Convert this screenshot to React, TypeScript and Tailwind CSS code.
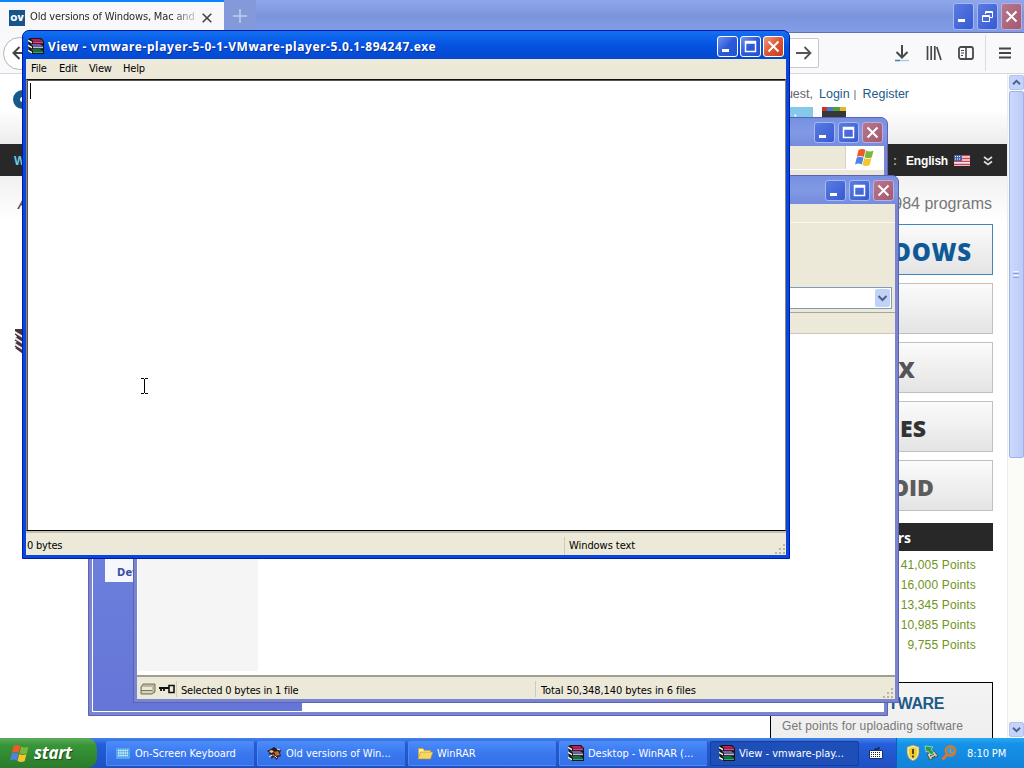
import type { ReactNode } from "react";
import clsx from "clsx";

const osButtons = [
  { label: "WINDOWS", className: "border-[#3c87c0] pr-[20px] text-[#0e5a97]" },
  { label: "", className: "border-[#c0c0c4] text-[#555]" },
  { label: "LINUX", className: "border-[#c0c0c4] pr-[77px] text-[#555]" },
  { label: "GAMES", className: "border-[#c0c0c4] pr-[66px] text-[#333]" },
  { label: "ANDROID", className: "border-[#c0c0c4] pr-[58px] text-[#5c5c5c]" },
];

const points = ["41,005", "16,000", "13,345", "10,985", "9,755"];

const RarIcon = ({ className }: { className?: string }) => (
  <svg viewBox="0 0 16 16" className={clsx("h-4 w-4 shrink-0", className)}>
    <path d="M0 1l3-1h10l3 3v13H4L0 13l1-2-1-3 1-2-1-2z" fill="#151515" />
    <path d="M3 1h9l3 2H5z" fill="#c01c58" />
    <path d="M5 3.500h10v1.700H5z" fill="#e8437a" />
    <path d="M3 6h9l3 2H5z" fill="#6a5fb0" />
    <path d="M5 8.500h10v1.700H5z" fill="#c3b4dc" />
    <path d="M3 11h9l3 2H5z" fill="#12733a" />
    <path d="M5 13.500h10V15H5z" fill="#2fae74" />
    <path
      d="M0 1.500l4 2.200v1.800L0 3.300zM0 6.500l4 2.200v1.800L0 8.300zM0 11.500l4 2.200v1.800l-4-2.200z"
      fill="#f5f1e4"
    />
  </svg>
);

const WindowsFlag = ({ className }: { className?: string }) => (
  <svg viewBox="0 0 20 19" className={clsx("shrink-0", className)}>
    <path d="M3.500 2q3.500-2 7 0L8.800 9q-3.300-1.800-7 0z" fill="#ec5b29" />
    <path d="M11.200 2.500q3.500 2 7.300 0L16.800 9.300q-3.500 1.900-7.300 0z" fill="#79b83c" />
    <path d="M1.700 9.700q3.300-1.800 6.800 0L6.800 16.500q-3.300-1.800-6.800 0z" fill="#4c83e6" />
    <path d="M9.200 10q3.300 1.800 7.300 0l-1.800 7q-3.500 1.800-7.200 0z" fill="#f6c52e" />
  </svg>
);

type CaptionButtonsProps = {
  active?: boolean;
  restore?: boolean;
  className?: string;
};

const CaptionButtons = (props: CaptionButtonsProps) => {
  const { active, restore, className } = props;
  const base = "h-[21px] w-[21px] rounded-[3px] border";
  const blue = active
    ? "border-white bg-linear-to-br from-[#7593f0] via-[#2c58da] to-[#2454cf]"
    : "border-[#a4b8f2] bg-linear-to-br from-[#5b7be2] to-[#3659d3]";
  const red = active
    ? "border-white bg-linear-to-br from-[#ee9a80] via-[#dc5532] to-[#c6401c]"
    : "border-[#c3aad8] bg-linear-to-br from-[#b5788f] to-[#a5586f]";

  return (
    <div className={clsx("flex items-center gap-[2px]", className)}>
      <svg viewBox="0 0 19 19" className={clsx(base, blue)}>
        <path d="M4 12h7v3H4z" fill="#fff" />
      </svg>
      <svg viewBox="0 0 19 19" className={clsx(base, blue)}>
        {restore ? (
          <path
            d="M7.500 7V4.500h7v6H12M7 5.500h8M4.500 8.500h7v6h-7zM4 9.500h8"
            fill="none"
            stroke="#fff"
          />
        ) : (
          <path
            d="M4.500 4.500h10v10h-10zM4 6h11"
            fill="none"
            stroke="#fff"
            strokeWidth="1.500"
          />
        )}
      </svg>
      <svg viewBox="0 0 19 19" className={clsx(base, red)}>
        <path d="M4.500 4.500l10 10M14.500 4.500l-10 10" stroke="#fff" strokeWidth="2" />
      </svg>
    </div>
  );
};

const ResizeGrip = () => (
  <svg viewBox="0 0 12 12" className="h-3 w-3 shrink-0">
    <path
      d="M9 1h2v2H9zM5 5h2v2H5zM9 5h2v2H9zM1 9h2v2H1zM5 9h2v2H5zM9 9h2v2H9z"
      fill="#b8b4a2"
    />
  </svg>
);

const ScrollButton = ({ d }: { d: string }) => (
  <svg
    viewBox="0 0 15 15"
    className="h-[15px] w-[15px] shrink-0 rounded-[2px] border border-[#b4c4f0] bg-[#c4d3fc]"
  >
    <path d={d} fill="none" stroke="#4d6185" strokeWidth="2.200" />
  </svg>
);

const Browser = () => (
  <div className="flex h-[738px] w-[1024px] flex-col font-['Liberation_Sans',sans-serif] [font-stretch:normal]">
    <div className="flex h-[33px] shrink-0 border-b border-[#5b72c0] bg-linear-to-b from-[#8ea7ec] via-[#7b95dd] to-[#829de6]">
      <div className="flex h-[33px] w-[224px] items-center border-t-2 border-[#0a84ff] bg-[#f8f8fb] pl-[9px] text-[#222]">
        <div className="flex h-4 w-4 items-center justify-center bg-[#16558b] font-['Open_Sans',sans-serif] text-[9px] font-extrabold text-white">
          OV
        </div>
        <span className="ml-[5px] w-[166px] bg-linear-to-r from-[#222] from-85% to-[#22222230] bg-clip-text font-['DejaVu_Sans_Condensed','DejaVu_Sans',sans-serif] text-[11px] tracking-[-0.150px] whitespace-nowrap text-transparent [font-stretch:condensed]">
          Old versions of Windows, Mac and
        </span>
        <svg viewBox="0 0 10 10" className="ml-[6px] h-[10px] w-[10px]">
          <path d="M.7.700l8.600 8.600M9.300.7L.7 9.300" stroke="#444" strokeWidth="1.600" />
        </svg>
      </div>
      <div className="flex w-8 items-center justify-center bg-[#8499da]">
        <svg viewBox="0 0 14 14" className="h-[14px] w-[14px]">
          <path d="M7 0v14M0 7h14" stroke="#c0ccf0" strokeWidth="1.600" />
        </svg>
      </div>
      <CaptionButtons restore className="mr-0 ml-auto gap-[3px] pr-[2px] [&>svg]:h-[27px]" />
    </div>

    <div className="flex h-[41px] shrink-0 items-center border-b border-[#d8d8dc] bg-[#f9f9fb]">
      <div className="ml-[3px] flex h-[33px] w-[33px] items-center rounded-full border border-[#b4b4b8] bg-white pl-2">
        <svg viewBox="0 0 14 14" className="h-[14px] w-[14px]">
          <path d="M14 7H2M7.500 1L1.500 7l6 6" fill="none" stroke="#444" strokeWidth="2" />
        </svg>
      </div>
      <div className="ml-[700px] flex h-[30px] w-[83px] items-center justify-end rounded-[2px] border border-[#c8c8cc] bg-white pr-[6px]">
        <svg viewBox="0 0 16 14" className="h-[14px] w-4">
          <path d="M0 7h14M8.500 1l6 6-6 6" fill="none" stroke="#555" strokeWidth="1.800" />
        </svg>
      </div>
      <svg viewBox="0 0 16 18" className="ml-[75px] h-[18px] w-4">
        <path d="M8 1v12M2.500 8L8 13.500 13.500 8" fill="none" stroke="#484848" strokeWidth="2" />
        <path d="M1 16.500h14" stroke="#a7c8e2" strokeWidth="1.400" />
        <path d="M1 16.500h5" stroke="#3f86bd" strokeWidth="1.400" />
      </svg>
      <svg viewBox="0 0 16 16" className="ml-4 h-4 w-4">
        <path d="M1.500 1v14M5.200 1v14M8.800 1v14M10.800 2l4.200 13" stroke="#484848" strokeWidth="1.700" />
      </svg>
      <svg viewBox="0 0 16 14" className="ml-4 h-[14px] w-4" fill="none" stroke="#484848">
        <rect x="1" y="1" width="14" height="12" rx="2" strokeWidth="1.800" />
        <path d="M8 1v12" strokeWidth="1.600" />
        <path d="M3 4.500h3M3 7h3M3 9.500h2" />
      </svg>
      <div className="ml-[11px] h-9 w-px bg-[#dcdce0]" />
      <svg viewBox="0 0 12 12" className="ml-[13px] h-3 w-3">
        <path d="M0 1.500h12M0 6h12M0 10.500h12" stroke="#444" strokeWidth="1.800" />
      </svg>
    </div>

    <div className="flex min-h-0 flex-1">
      <div className="flex w-[1007px] flex-col overflow-hidden bg-white">
        <div className="flex h-[70px] shrink-0 bg-linear-to-b from-white from-50% to-[#ececec]">
          <div className="mt-4 ml-[13px] h-[19px] w-[19px] rounded-full border-7 border-[#17598a] bg-white" />
          <div className="mt-[12px] ml-[739px] flex flex-col">
            <div className="flex h-4 items-center text-[12.500px] whitespace-pre text-[#666]">
              <span className="w-[42px] text-right">Guest,</span>
              <span className="ml-[6px] text-[#245a8a]">Login</span>
              <span className="ml-[4px] text-[11px]">|</span>
              <span className="ml-[6px] text-[#245a8a]">Register</span>
            </div>
            <div className="mt-[5px] flex">
              <div className="ml-[17px] h-6 w-[25px] bg-[#85c9ea] pt-1 pl-[6px] text-[9px] text-white">t</div>
              <div className="ml-[9px] h-6 w-6 bg-[#373737]">
                <div className="flex h-1">
                  <div className="w-[5px] bg-[#cc3326]" />
                  <div className="w-[6px] bg-[#4379d8]" />
                  <div className="w-[7px] bg-[#4fa03c]" />
                  <div className="w-[6px] bg-[#e6b527]" />
                </div>
              </div>
            </div>
          </div>
        </div>

        <div className="flex h-8 shrink-0 items-center bg-[#282828] pt-px pr-[13px] pl-[14px] text-[12px] font-bold text-white">
          <span className="text-[#69cbea]">WINDOWS</span>
          <span className="ml-auto text-[#aaa]">:</span>
          <span className="ml-[9px] tracking-[-0.200px]">English</span>
          <svg viewBox="0 0 16 11" className="ml-[6px] h-[11px] w-4">
            <path d="M0 0h16v11H0z" fill="#f4e6e8" />
            <path d="M0 .700h16M0 3.500h16M0 6.300h16M0 9.500h16" stroke="#ce4552" strokeWidth="1.300" />
            <path d="M0 0h8v6H0z" fill="#4663ad" />
            <path d="M1 1.500h6M1 4h6" stroke="#fff" strokeDasharray="1 1" />
          </svg>
          <svg viewBox="0 0 10 10" className="mr-px ml-[13px] h-[10px] w-[10px]">
            <path d="M1 1l4 3 4-3M1 5.500l4 3 4-3" fill="none" stroke="#ddd" strokeWidth="1.700" />
          </svg>
        </div>

        <div className="flex min-h-0 flex-1 justify-between bg-linear-to-b from-[#f1f1f1] to-white to-8% pr-[14px] pl-[14px]">
          <div className="flex flex-col">
            <span className="mt-[18px] ml-1 text-[16px] leading-5 text-[#444] italic">A</span>
            <svg viewBox="0 0 16 28" className="mt-[114px] h-7 w-4">
              <path d="M1 1h15v27L9 26 1 20l2-1-2-4 2-1-2-4 2-1-2-4z" fill="#47333b" />
              <path d="M1 3l8 5v3L1 6zM1 9l8 5v3l-8-5zM1 15l8 5v3l-8-5z" fill="#efeaf0" />
              <path d="M1 6l8 5M1 12l8 5M1 18l8 5" stroke="#47333b" strokeWidth="1.200" />
            </svg>
          </div>
          <div className="flex w-[223px] flex-col">
            <span className="mt-[18px] pr-px text-right text-[16px] leading-5 text-[#777]">24,984 programs</span>
            <div className="mt-[10px] flex flex-col gap-2">
              {osButtons.map((button, index) => (
                <div
                  key={index}
                  className={clsx(
                    "flex h-[51px] items-center justify-end border bg-linear-to-b from-[#fbfbfb] to-[#e4e4e4] pt-[4px] font-['Open_Sans',sans-serif] leading-none font-extrabold",
                    index > 1 ? "text-[23px]" : "text-[24px] tracking-[0.800px]",
                    button.className
                  )}
                >
                  {button.label}
                </div>
              ))}
            </div>
            <div className="mt-3 flex h-7 shrink-0 items-center justify-end bg-[#282828] pr-[82px] font-['Open_Sans',sans-serif] text-[14px] font-bold text-white">
              Top uploaders
            </div>
            <div className="mt-[4px] flex flex-col pr-[17px] text-right text-[12px] leading-5 tracking-[0.150px] text-[#6f9420]">
              {points.map((point) => (
                <span key={point}>{point} Points</span>
              ))}
            </div>
            <div className="mt-[27px] flex h-20 shrink-0 flex-col border border-black bg-linear-to-b from-[#f4f4f4] to-[#ececec] pt-[11px]">
              <span className="pr-[48px] text-right text-[16px] leading-5 font-bold tracking-[-0.400px] text-[#1d5a85]">
                UPLOAD SOFTWARE
              </span>
              <span className="mt-[2px] pl-[11px] text-[12px] leading-5 tracking-[0.150px] whitespace-nowrap text-[#777]">
                Get points for uploading software
              </span>
            </div>
          </div>
        </div>
      </div>

      <div className="flex w-[17px] flex-col items-center border-l border-[#eeeee8] bg-[#fbfbf8] pt-[1px]">
        <ScrollButton d="M3.500 9.500l4-4 4 4" />
        <div className="mt-[1px] flex h-[367px] w-[15px] items-center justify-center rounded-[2px] border border-[#9cb4e8] bg-linear-to-r from-[#cbd8ff] to-[#bccbf8]">
          <div className="flex w-[6px] flex-col gap-px">
            <div className="h-px bg-[#eef3ff]" />
            <div className="h-px bg-[#8ea6df]" />
            <div className="h-px bg-[#eef3ff]" />
            <div className="h-px bg-[#8ea6df]" />
          </div>
        </div>
        <div className="mt-auto flex pb-[1px]">
          <ScrollButton d="M3.500 5.500l4 4 4-4" />
        </div>
      </div>
    </div>
  </div>
);

type InactiveWindowProps = {
  className: string;
  children: ReactNode;
};

const InactiveWindow = ({ className, children }: InactiveWindowProps) => (
  <div
    className={clsx(
      "absolute flex flex-col overflow-hidden rounded-t-[7px] border border-[#5a63b4] bg-[#7b84d0]",
      className
    )}
  >
    <div className="flex h-7 shrink-0 items-center justify-end bg-linear-to-b from-[#7690e0] via-[#8299e4] to-[#748cdc] pr-1">
      <CaptionButtons className="gap-[3px] pt-px" />
    </div>
    {children}
  </div>
);

const ExplorerWindow = () => (
  <InactiveWindow className="top-[117px] left-[88px] h-[599px] w-[800px]">
    <div className="mx-[3px] mb-[3px] flex min-h-0 flex-1 flex-col bg-white">
      <div className="flex h-[23px] shrink-0 justify-end bg-[#ece9d8]">
        <div className="flex w-[39px] items-center justify-center border-l border-[#d8d4c2] bg-white">
          <WindowsFlag className="h-[19px] w-5" />
        </div>
      </div>
      <div className="h-9 shrink-0 border-t border-white bg-[#ece9d8]" />
      <div className="flex min-h-0 flex-1 pb-px pl-[1px]">
        <div className="flex w-[209px] flex-col bg-linear-to-b from-[#7b96e2] to-[#6575d8] pt-[352px] pl-[12px]">
          <div className="flex h-[25px] items-center bg-[#f6f7fc] pt-[7px] pl-3 text-[11px] font-bold tracking-[0.200px] text-[#3c50a0]">
            Details
          </div>
        </div>
      </div>
    </div>
  </InactiveWindow>
);

const ArchiveWindow = () => (
  <InactiveWindow className="top-[175px] left-[133px] h-[528px] w-[766px]">
    <div className="mx-[3px] mb-[3px] flex min-h-0 flex-1 flex-col bg-[#ece9d8]">
      <div className="h-[19px] shrink-0 border-b border-[#f8f7f0]" />
      <div className="h-[64px] shrink-0" />
      <div className="mr-[3px] flex h-[22px] shrink-0 items-center justify-end border border-[#7f9db9] bg-white pr-px">
        <svg viewBox="0 0 15 18" className="h-[18px] w-[15px] rounded-[2px] bg-[#c1d2f8]">
          <path d="M3.500 7l4 4 4-4" fill="none" stroke="#4d6185" strokeWidth="2" />
        </svg>
      </div>
      <div className="mt-[3px] h-[22px] shrink-0 border-t border-b border-t-[#a8a598] border-b-[#cbc7b8]" />
      <div className="flex min-h-0 flex-1 border-b-2 border-[#a09e90] bg-white pb-1 pl-px">
        <div className="w-[120px] bg-[#f5f5f6]" />
      </div>
      <div className="flex h-[22px] shrink-0 items-center bg-[#ece9d8] pt-[6px] pr-px text-[11px] tracking-[-0.200px] text-black">
        <svg viewBox="0 0 16 12" className="mb-1 ml-[3px] h-3 w-4">
          <path d="M3 1h12v8l-3 2H1V4z" fill="#b9b99c" stroke="#77775a" />
          <path d="M2 4h10v3H2z" fill="#e9e9d6" />
          <path d="M2 8h10v2H2z" fill="#d4d4ba" />
          <path d="M1 7.500h11" stroke="#77775a" />
        </svg>
        <svg viewBox="0 0 16 10" className="mb-1 ml-[3px] h-[10px] w-4">
          <path d="M0 4h10M2 4v3M5 4v3" stroke="#111" strokeWidth="1.800" />
          <path d="M10 1.500h5v7h-5z" fill="none" stroke="#111" strokeWidth="1.600" />
        </svg>
        <div className="mb-1 ml-px h-4 w-px bg-[#cfcbb8]" />
        <span className="ml-1 w-[354px]">Selected 0 bytes in 1 file</span>
        <div className="mb-1 h-4 w-px bg-[#cfcbb8]" />
        <span className="ml-[5px] tracking-[-0.100px]">Total 50,348,140 bytes in 6 files</span>
        <div className="ml-auto self-end">
          <ResizeGrip />
        </div>
      </div>
    </div>
  </InactiveWindow>
);

const ViewWindow = () => (
  <div className="absolute top-[30px] left-[22px] flex h-[529px] w-[768px] flex-col overflow-hidden rounded-t-[7px] border border-[#0019a8] bg-[#0747dc]">
    <div className="flex h-[28px] shrink-0 items-center bg-linear-to-b from-[#1470f0] via-[#0553e2] to-[#0348d0] pr-[5px] pl-[5px]">
      <RarIcon className="mt-[1px]" />
      <span className="ml-[4px] pt-[3px] font-['Noto_Sans',sans-serif] text-[12px] font-bold tracking-[0.580px] whitespace-nowrap text-white [font-stretch:normal] [text-shadow:1px_1px_0_#0a2e90]">
        View - vmware-player-5-0-1-VMware-player-5.0.1-894247.exe
      </span>
      <CaptionButtons active className="ml-auto pt-[2px]" />
    </div>
    <div className="mx-[3px] mb-[3px] flex min-h-0 flex-1 flex-col bg-[#ece9d8] text-[11px] tracking-[-0.200px] text-black">
      <div className="flex h-5 shrink-0 items-center pl-[5px]">
        <span className="w-[28px]">File</span>
        <span className="w-[30px]">Edit</span>
        <span className="w-[34px]">View</span>
        <span>Help</span>
      </div>
      <div className="min-h-0 flex-1 border border-[#8a877a] border-t-[#111] border-b-black">
        <div className="h-full border-t border-l border-[#555] bg-white pt-[2px] pl-[2px]">
          <div className="h-4 w-px bg-black" />
        </div>
      </div>
      <div className="flex h-[24px] shrink-0 items-center border-t-2 border-[#c5c2b4] pt-[4px] pl-px">
        <span className="w-[537px]">0 bytes</span>
        <div className="h-[18px] w-px bg-[#cfcbb8]" />
        <span className="ml-1 tracking-[-0.060px]">Windows text</span>
        <div className="ml-auto self-end">
          <ResizeGrip />
        </div>
      </div>
    </div>
  </div>
);

type TaskButtonProps = {
  icon: ReactNode;
  label: string;
  active?: boolean;
};

const TaskButton = ({ icon, label, active }: TaskButtonProps) => (
  <div
    className={clsx(
      "flex h-[25px] w-[149px] items-center gap-1 rounded-[2px] border pl-[8px] text-[11px] tracking-[-0.020px] whitespace-nowrap text-white",
      active
        ? "border-[#163f9c] bg-[#1e4fb8]"
        : "border-[#4d8cf5] border-r-[#2456c4] bg-linear-to-b from-[#4a8bf8] via-[#3a78ef] to-[#3570e8]"
    )}
  >
    {icon}
    <span className="pt-[3px]">{label}</span>
  </div>
);

const Taskbar = () => (
  <div className="flex h-[30px] w-[1024px] items-center bg-linear-to-b from-[#4683ec] via-[#245edb] via-20% to-[#1f4fc0]">
    <div className="flex h-[30px] w-[97px] items-center rounded-r-[10px] bg-linear-to-b from-[#5cab5c] via-[#379537] via-25% to-[#2b7b2b] pl-[10px]">
      <WindowsFlag className="h-[19px] w-5" />
      <span className="ml-[4px] font-['Open_Sans',sans-serif] text-[17px] font-bold tracking-[-0.300px] text-white italic [font-stretch:normal] [text-shadow:1px_1px_1px_#1a4a1a]">
        start
      </span>
    </div>
    <div className="ml-[9px] flex gap-[2px]">
      <TaskButton
        label="On-Screen Keyboard"
        icon={
          <svg viewBox="0 0 16 16" className="h-4 w-4">
            <rect x="1" y="3" width="14" height="11" rx="1" fill="#54a9e8" />
            <path d="M3 5.500h10M3 8h10M3 10.500h10" stroke="#e6f7ff" strokeWidth="1.500" strokeDasharray="1.500 .7" />
          </svg>
        }
      />
      <TaskButton
        label="Old versions of Win..."
        icon={
          <svg viewBox="0 0 16 16" className="h-4 w-4">
            <path d="M1 6l4-2 3-2 3 2 4 1-1 3 1 3-3 1-1 3-3-3-3 2 1-4-4-1 2-1z" fill="#291c1a" />
            <path d="M3 6l3-1 2 2-3 1z" fill="#e8c69c" />
            <path d="M8 7l4-1 2 4-4 1zM5 10l3-1 1 3z" fill="#b96d42" />
            <path d="M11 4l3 1M3 12l3-2M9 11l2 2" stroke="#f1ead9" />
          </svg>
        }
      />
      <TaskButton
        label="WinRAR"
        icon={
          <svg viewBox="0 0 16 16" className="h-4 w-4">
            <path d="M1 3h5l1.500 2H14v9H1z" fill="#d2a23c" />
            <path d="M2 4h4l1 2h6v7H2z" fill="#fff2a6" />
            <path d="M3.500 7H16l-2.500 7H1z" fill="#f6d763" stroke="#b98a2d" strokeWidth=".6" />
          </svg>
        }
      />
      <TaskButton label="Desktop - WinRAR (..." icon={<RarIcon />} />
      <TaskButton label="View - vmware-play..." icon={<RarIcon />} active />
    </div>
    <svg viewBox="0 0 14 12" className="ml-[10px] h-3 w-[14px]">
      <path d="M6 4V2h4V0" fill="none" stroke="#111" />
      <path d="M.5 3.500h13v8H.5z" fill="#fff" stroke="#173070" />
      <path d="M2 5.500h10M2 7.500h10M2 9.500h10" stroke="#222" strokeDasharray="1 1" />
    </svg>
    <div className="ml-auto flex h-[30px] w-[128px] items-center border-l border-[#0e5cbc] bg-linear-to-b from-[#29a9f3] via-[#1592e8] via-20% to-[#1282d8] pl-[8px]">
      <svg viewBox="0 0 16 16" className="h-4 w-4">
        <path d="M8 0l6 2v6q0 5-6 8-6-3-6-8V2z" fill="#f1e9b4" stroke="#9b8a45" strokeWidth=".7" />
        <path d="M8 2l4 1.500V8q0 4-4 6-4-2-4-6V3.500z" fill="#f3cb22" />
        <path d="M8 4v5M8 10.500v2" stroke="#222" strokeWidth="1.600" />
      </svg>
      <svg viewBox="0 0 16 16" className="ml-[2px] h-4 w-4">
        <path d="M4 9l7-3 4 5-8 4z" fill="#c8d2c4" stroke="#435746" />
        <path d="M7 11l4-2M8.500 13l4-2" stroke="#34423a" />
        <path d="M2 1l8 1-2 2 3 4-3 2-3-4-2 1z" fill="#2f9a40" stroke="#d5eed5" strokeWidth=".6" />
      </svg>
      <svg viewBox="0 0 16 16" className="ml-[2px] h-4 w-4">
        <circle cx="9.500" cy="6" r="4.700" fill="#28a0e8" stroke="#d8782a" strokeWidth="2.600" />
        <path d="M6 9.500L1.500 14.500" stroke="#d8782a" strokeWidth="3" />
        <path d="M9.500 3.500v4M9.500 7.500H12" fill="none" stroke="#e68b3c" strokeWidth="1" />
      </svg>
      <span className="ml-[10px] pt-[2px] text-[11px] tracking-[-0.100px] whitespace-nowrap text-white">8:10 PM</span>
    </div>
  </div>
);

export default function App() {
  return (
    <div className="relative h-[768px] w-[1024px] overflow-hidden bg-white font-['DejaVu_Sans_Condensed','DejaVu_Sans',sans-serif] [font-stretch:condensed]">
      <Browser />
      <ExplorerWindow />
      <ArchiveWindow />
      <ViewWindow />
      <Taskbar />

      {/* text cursor */}
      <svg viewBox="0 0 7 16" className="absolute top-[378px] left-[141px] h-4 w-[7px]">
        <path d="M0 .5h3M4 .5h3M3.500 1v14M0 15.500h3M4 15.500h3" stroke="#000" />
      </svg>
    </div>
  );
}
